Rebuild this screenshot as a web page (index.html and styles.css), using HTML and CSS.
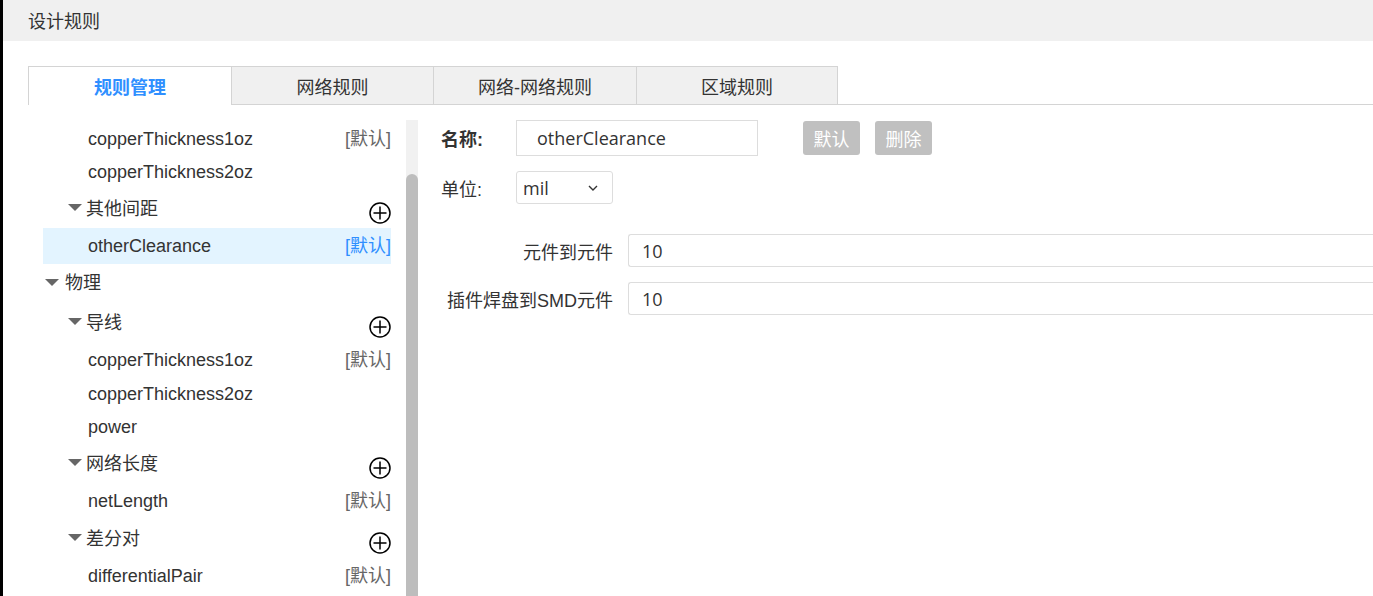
FILE: index.html
```html
<!DOCTYPE html>
<html lang="zh-CN">
<head>
  <meta charset="UTF-8">
  <meta name="viewport" content="width=device-width, initial-scale=1.0">
  <title>设计规则</title>
  <link rel="stylesheet" href="styles.css">
</head>
<body>
  <div class="page-title">设计规则</div>

  <div class="tabs">
    <div class="tab active">规则管理</div>
    <div class="tab">网络规则</div>
    <div class="tab">网络-网络规则</div>
    <div class="tab">区域规则</div>
  </div>

  <div class="main">
    <div class="tree">
      <div class="leaf"><span>copperThickness1oz</span><span class="tag">[默认]</span></div>
      <div class="leaf"><span>copperThickness2oz</span></div>
      <div class="folder">
        <span class="arrow"></span><span class="folder-name">其他间距</span>
        <svg class="plus" viewBox="0 0 22 22"><circle cx="11" cy="11" r="10" /><path d="M4.5 11H17.5M11 4.5V17.5" /></svg>
      </div>
      <div class="leaf selected"><span>otherClearance</span><span class="tag">[默认]</span></div>
      <div class="folder top"><span class="arrow"></span><span class="folder-name">物理</span></div>
      <div class="folder">
        <span class="arrow"></span><span class="folder-name">导线</span>
        <svg class="plus" viewBox="0 0 22 22"><circle cx="11" cy="11" r="10" /><path d="M4.5 11H17.5M11 4.5V17.5" /></svg>
      </div>
      <div class="leaf"><span>copperThickness1oz</span><span class="tag">[默认]</span></div>
      <div class="leaf"><span>copperThickness2oz</span></div>
      <div class="leaf"><span>power</span></div>
      <div class="folder">
        <span class="arrow"></span><span class="folder-name">网络长度</span>
        <svg class="plus" viewBox="0 0 22 22"><circle cx="11" cy="11" r="10" /><path d="M4.5 11H17.5M11 4.5V17.5" /></svg>
      </div>
      <div class="leaf"><span>netLength</span><span class="tag">[默认]</span></div>
      <div class="folder last">
        <span class="arrow"></span><span class="folder-name">差分对</span>
        <svg class="plus" viewBox="0 0 22 22"><circle cx="11" cy="11" r="10" /><path d="M4.5 11H17.5M11 4.5V17.5" /></svg>
      </div>
      <div class="leaf"><span>differentialPair</span><span class="tag">[默认]</span></div>
    </div>

    <div class="scrollbar"><div class="thumb"></div></div>

    <div class="detail">
      <div class="name-row">
        <label class="head-label bold">名称:</label>
        <input class="name-input" type="text" value="otherClearance">
        <button class="btn first">默认</button>
        <button class="btn">删除</button>
      </div>
      <div class="unit-row">
        <label class="head-label">单位:</label>
        <div class="unit-select">
          <span>mil</span>
          <svg class="chevron" viewBox="0 0 10 6"><path d="M1 1L5 5L9 1" /></svg>
        </div>
      </div>
      <div class="field-row first-field">
        <label class="field-label">元件到元件</label>
        <input class="field-input" type="text" value="10">
      </div>
      <div class="field-row">
        <label class="field-label">插件焊盘到SMD元件</label>
        <input class="field-input" type="text" value="10">
      </div>
    </div>
  </div>
</body>
</html>
```

FILE: styles.css
```css
body {
  margin: 0;
  height: 596px;
  overflow: hidden;
  box-sizing: border-box;
  background: #fff;
  border-left: 3px solid #000;
  font-family: "Liberation Sans", "Noto Sans CJK SC", sans-serif;
  font-size: 18px;
  color: #333;
}

.page-title {
  height: 41px;
  line-height: 44px;
  padding-left: 25px;
  background: #f0f0f0;
}

.tabs {
  display: flex;
  height: 39px;
  margin: 25px 0 0 25px;
  box-sizing: border-box;
  border-bottom: 1px solid #d4d4d4;
}

.tab {
  width: 202px;
  height: 39px;
  line-height: 42px;
  box-sizing: border-box;
  text-align: center;
  background: #f0f0f0;
  border: 1px solid #d4d4d4;
  border-left: none;
}

.tab:nth-child(3) {
  width: 203px;
}

.tab:nth-child(4) {
  width: 201px;
}

.tab.active {
  width: 204px;
  background: #fff;
  border-left: 1px solid #d4d4d4;
  border-bottom: none;
  font-weight: bold;
  color: #2f8fff;
}

.main {
  display: flex;
  height: 491px;
  margin-top: 15px;
}

.tree {
  flex-shrink: 0;
  width: 348px;
  margin-left: 40px;
  padding-top: 1.5px;
}

.leaf {
  display: flex;
  justify-content: space-between;
  height: 33.5px;
  line-height: 34px;
  padding-left: 45px;
  white-space: nowrap;
}

.leaf.selected {
  height: 36px;
  line-height: 36px;
  margin-top: -1px;
  background: #e3f4ff;
}

.tag {
  color: #666;
}

.selected .tag {
  color: #2f8fff;
}

.folder {
  display: flex;
  height: 40.5px;
  line-height: 40px;
  padding-left: 25px;
  white-space: nowrap;
}

.folder.top {
  height: 38.5px;
  line-height: 38px;
  padding-left: 2px;
}

.folder.last {
  margin-top: 1px;
}

.arrow {
  width: 0;
  height: 0;
  margin-top: 15px;
  margin-right: 4px;
  border-left: 7px solid transparent;
  border-right: 7px solid transparent;
  border-top: 7px solid #666;
}

.folder.top .arrow {
  margin-right: 6px;
}

.plus {
  width: 22px;
  height: 22px;
  margin-left: auto;
  margin-top: 13px;
  fill: none;
  stroke: #000;
  stroke-width: 1.5;
}

.scrollbar {
  flex-shrink: 0;
  width: 12px;
  margin-left: 15px;
  background: #f1f1f1;
}

.thumb {
  height: 437px;
  margin-top: 54px;
  background: #bdbdbd;
  border-radius: 6px 6px 0 0;
}

.detail {
  flex: 1;
  min-width: 0;
  padding-left: 23px;
}

.name-row {
  display: flex;
  align-items: center;
  height: 36px;
}

.head-label {
  width: 75px;
  flex-shrink: 0;
}

.bold {
  font-weight: bold;
}

.name-input {
  width: 242px;
  height: 36px;
  padding: 0 20px;
  box-sizing: border-box;
  border: 1px solid #ddd;
  font-family: "Open Sans", sans-serif;
  font-size: 18px;
  color: #333;
}

.btn {
  width: 57px;
  height: 34px;
  margin-left: 15px;
  padding: 0;
  background: #c0c0c0;
  border: none;
  border-radius: 3px;
  font-family: inherit;
  font-size: 18px;
  color: #fff;
}

.btn.first {
  margin-left: 45px;
}

.unit-row {
  display: flex;
  align-items: center;
  height: 33px;
  margin-top: 15px;
}

.unit-select {
  display: flex;
  align-items: center;
  justify-content: space-between;
  width: 97px;
  height: 33px;
  padding: 0 14px 0 6px;
  box-sizing: border-box;
  background: #fff;
  border: 1px solid #ddd;
  border-radius: 3px;
  font-family: "Open Sans", sans-serif;
  font-size: 18px;
  color: #333;
}

.chevron {
  width: 10px;
  height: 6px;
  fill: none;
  stroke: #333;
  stroke-width: 1.4;
}

.field-row {
  display: flex;
  align-items: center;
  height: 33px;
  margin-top: 15px;
}

.first-field {
  margin-top: 30px;
}

.field-label {
  width: 172px;
  flex-shrink: 0;
  text-align: right;
  white-space: nowrap;
}

/* runs to the window edge, so no right border */
.field-input {
  flex: 1;
  min-width: 0;
  height: 33px;
  margin-left: 15px;
  padding: 0 13px;
  box-sizing: border-box;
  border: 1px solid #ddd;
  border-right: none;
  border-radius: 3px 0 0 3px;
  font-family: "Open Sans", sans-serif;
  font-size: 18px;
  color: #333;
}
```
